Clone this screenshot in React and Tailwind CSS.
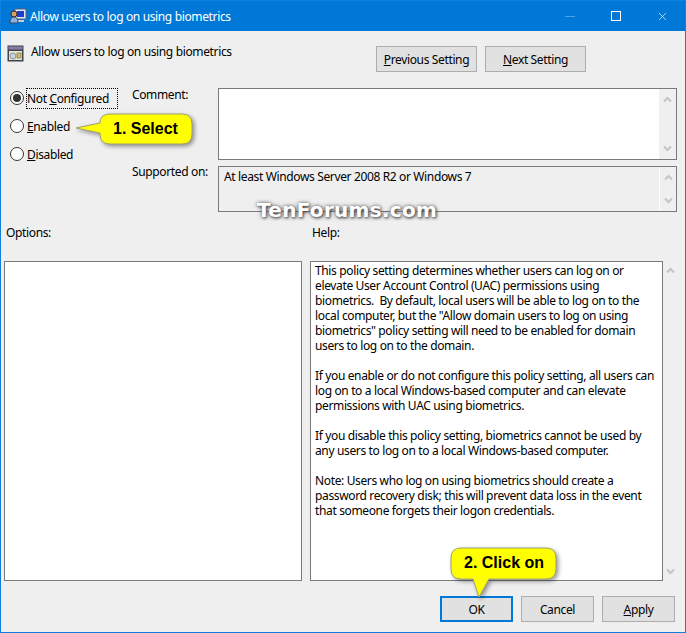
import { X } from 'lucide-react';

const help = [
  ['This policy setting determines whether users can log on or', 'elevate User Account Control (UAC) permissions using', 'biometrics.  By default, local users will be able to log on to the', 'local computer, but the "Allow domain users to log on using', 'biometrics" policy setting will need to be enabled for domain', 'users to log on to the domain.'],
  ['If you enable or do not configure this policy setting, all users can', 'log on to a local Windows-based computer and can elevate', 'permissions with UAC using biometrics.'],
  ['If you disable this policy setting, biometrics cannot be used by', 'any users to log on to a local Windows-based computer.'],
  ['Note: Users who log on using biometrics should create a', 'password recovery disk; this will prevent data loss in the event', 'that someone forgets their logon credentials.'],
];

function Chevron({ down }) {
  return (
    <svg width="9" height="7" viewBox="0 0 9 7" className="shrink-0">
      <path d={down ? 'M1 1.5 L4.5 5 L8 1.5' : 'M1 5.5 L4.5 2 L8 5.5'} fill="none" stroke="#c4c4c4" strokeWidth="2" />
    </svg>
  );
}

function ScrollBar({ className }) {
  return (
    <div className={`flex flex-col items-center justify-between ${className}`}>
      <Chevron />
      <Chevron down />
    </div>
  );
}

function Radio({ checked, children, focus }) {
  return (
    <div className="flex items-center h-[20px]">
      <div className="w-[14px] h-[14px] rounded-full border border-[#333] bg-white flex items-center justify-center shrink-0">
        {checked && <div className="w-[8px] h-[8px] rounded-full bg-[#333]" />}
      </div>
      <div className={`ml-[2px] h-[21px] flex items-center ${focus ? 'w-[92px] border border-dotted border-black' : 'pl-px'}`}>{children}</div>
    </div>
  );
}

function Btn({ children, border = 'border border-[#adadad]', w = 'w-[73px]' }) {
  return (
    <div className={`${w} h-[26px] bg-[#e1e1e1] ${border} flex items-center justify-center`}>{children}</div>
  );
}

function Callout({ className, w, h, tail, children }) {
  return (
    <div className={`absolute ${className}`}>
      <svg width={w} height={h} viewBox={`0 0 ${w} ${h}`} className="block overflow-visible drop-shadow-[2px_2px_2px_rgba(0,0,0,0.4)]">
        <path d={tail} fill="#ffff00" stroke="#a0a070" strokeWidth="1" />
      </svg>
      {children}
    </div>
  );
}

export default function App() {
  return (
    <div className="relative w-[686px] h-[633px] overflow-hidden flex flex-col bg-[#efefef] border border-[#0f80dc] font-['Noto_Sans',sans-serif] text-[12px] leading-[15px] tracking-[-0.36px] text-black">
      {/* Title bar */}
      <div className="h-[30px] shrink-0 bg-[#0078d7] flex items-center text-white">
        <svg width="18" height="18" viewBox="0 0 18 18" className="ml-[8px]">
          <rect x="6" y="2" width="11" height="10" fill="#dfe8f2" stroke="#52607a" />
          <rect x="8" y="4" width="7" height="6" fill="#1d3fd0" />
          <rect x="9" y="13" width="6" height="2" fill="#c8ccd2" />
          <circle cx="5" cy="7" r="3" fill="#d9a066" stroke="#3b2b1e" />
          <path d="M1 16 Q1 10 5 10 Q9 10 9 16 Z" fill="#8fb0d8" stroke="#314a70" />
        </svg>
        <span className="ml-[3px]">Allow users to log on using biometrics</span>
        <div className="ml-auto flex items-center h-full">
          <div className="w-[46px] flex justify-center"><div className="w-[10px] h-px bg-[#4da1e6]" /></div>
          <div className="w-[46px] flex justify-center"><div className="w-[10px] h-[10px] border border-white" /></div>
          <div className="w-[46px] flex justify-center"><X size={13} strokeWidth={1.2} /></div>
        </div>
      </div>

      {/* Policy name and previous/next */}
      <div className="flex items-start pt-[15px] pl-[6px] pr-[99px] h-[57px] shrink-0">
        <svg width="17" height="17" viewBox="0 0 17 17" className="mt-[-1px]">
          <rect x="0.5" y="0.5" width="16" height="16" fill="#3c4650" />
          <rect x="1.5" y="1.5" width="14" height="3" fill="#8a7aa8" />
          <rect x="2" y="6" width="13" height="9" fill="#e8e4cc" />
          <circle cx="6" cy="11" r="3" fill="#c8d4dc" stroke="#667" strokeWidth="0.6" />
          <rect x="10" y="8" width="4" height="5" fill="#d8b860" stroke="#665" strokeWidth="0.6" />
        </svg>
        <span className="ml-[7px] mt-[-2px]">Allow users to log on using biometrics</span>
        <div className="ml-auto flex gap-[8px]">
          <Btn w="w-[101px]"><span><u>P</u>revious Setting</span></Btn>
          <Btn w="w-[101px]"><span><u>N</u>ext Setting</span></Btn>
        </div>
      </div>

      {/* Radios, comment, supported on */}
      <div className="flex h-[124px] shrink-0">
        <div className="w-[131px] pl-[9px] flex flex-col gap-[8px] shrink-0">
          <Radio checked focus><span>Not <u>C</u>onfigured</span></Radio>
          <Radio><span><u>E</u>nabled</span></Radio>
          <Radio><span><u>D</u>isabled</span></Radio>
        </div>
        <div className="w-[86px] shrink-0 flex flex-col">
          <span className="h-[77px] mt-[-1px]">Comment:</span>
          <span>Supported on:</span>
        </div>
        <div className="w-[459px] shrink-0 flex flex-col gap-[6px]">
          <div className="h-[72px] bg-white border border-[#7a7a7a] flex justify-end">
            <ScrollBar className="w-[17px] h-full bg-[#f0f0f0] py-[7px]" />
          </div>
          <div className="h-[46px] border border-[#7a7a7a] flex justify-between pl-[5px] pt-[2px]">
            <span>At least Windows Server 2008 R2 or Windows 7</span>
            <ScrollBar className="w-[17px] mt-[-2px] h-[44px] border-l border-white py-[7px]" />
          </div>
        </div>
      </div>

      {/* Options / Help labels */}
      <div className="flex h-[49px] shrink-0 pt-[13px]">
        <span className="w-[311px] pl-[5px]">Options:</span>
        <span>Help:</span>
      </div>

      {/* Options and help panes */}
      <div className="flex h-[320px] shrink-0 pl-[3px]">
        <div className="w-[298px] bg-white border border-[#7a7a7a]" />
        <div className="ml-[8px] w-[353px] bg-white border border-[#7a7a7a] pl-[4px] pt-[1px] flex flex-col gap-[15px] whitespace-pre">
          {help.map((para, i) => (
            <div key={i}>
              {para.map((line) => <div key={line}>{line}</div>)}
            </div>
          ))}
        </div>
        <ScrollBar className="w-[15px] py-[6px]" />
      </div>

      {/* Dialog buttons */}
      <div className="flex justify-end gap-[8px] pt-[15px] pr-[10px]">
        <Btn border="border-2 border-[#0078d7]">OK</Btn>
        <Btn>Cancel</Btn>
        <Btn><span><u>A</u>pply</span></Btn>
      </div>

      <Callout
        className="left-[75px] top-[112px]"
        w={118}
        h={32}
        tail="M34 1 H106 Q116 1 116 11 V21 Q116 31 106 31 H34 Q24 31 24 21 V20 L0 15 L24 10 Q24 1 34 1 Z"
      >
        <span className="absolute left-[37px] top-[6px] font-['Liberation_Sans',sans-serif] font-bold text-[16px] leading-[20px] tracking-normal whitespace-nowrap">1. Select</span>
      </Callout>
      <Callout
        className="left-[450px] top-[546px]"
        w={106}
        h={50}
        tail="M10 1 H95 Q105 1 105 11 V22 Q105 32 95 32 H38 L28 50 L22 32 H10 Q0 32 0 22 V11 Q0 1 10 1 Z"
      >
        <span className="absolute left-[13px] top-[6px] font-['Liberation_Sans',sans-serif] font-bold text-[16px] leading-[20px] tracking-normal whitespace-nowrap">2. Click on</span>
      </Callout>

      {/* Watermark */}
      <span className="absolute left-[256px] top-[197px] font-['DejaVu_Sans',sans-serif] font-bold text-[20px] leading-[24px] tracking-[0.3px] text-white whitespace-nowrap [text-shadow:1px_1px_3px_#444,0_0_4px_#666]">TenForums.com</span>
    </div>
  );
}
